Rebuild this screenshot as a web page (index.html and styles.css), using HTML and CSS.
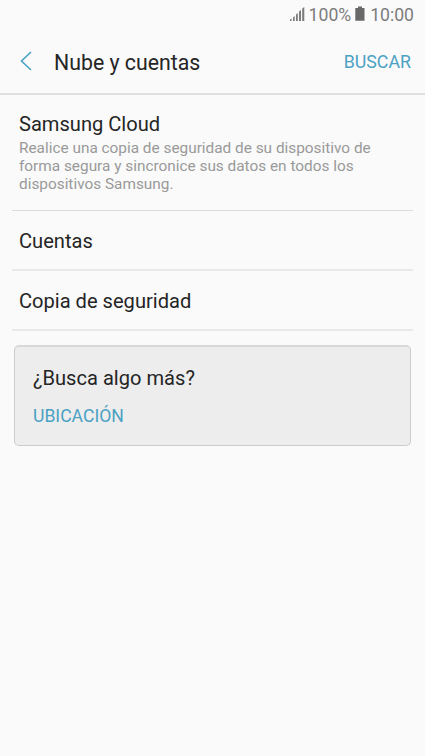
FILE: index.html
```html
<!DOCTYPE html>
<html lang="es">
<head>
<meta charset="utf-8">
<title>Nube y cuentas</title>
<link rel="stylesheet" href="styles.css">
</head>
<body>
<div class="status">
  <svg class="signal" width="15" height="14" viewBox="0 0 15 14"><path d="M0 12.500 1.500 11.500V14H0zM3 10.500 4.700 9v5H3zM6 7.500 7.800 6v8H6zM9 4.500 11 3v11H9zM12.200 1.500 14.300 0v14h-2.100z"/></svg>
  <span class="percent">100%</span>
  <svg class="battery" width="10" height="15" viewBox="0 0 10 15"><path d="M3 0.500h4V2h2.500v12.700H0.300V2H3z"/></svg>
  <span class="time">10:00</span>
</div>
<header class="bar">
  <svg class="back" width="12" height="20" viewBox="0 0 12 20"><path d="M11 1 1.500 10l9.500 9"/></svg>
  <h1>Nube y cuentas</h1>
  <a class="search">BUSCAR</a>
</header>
<main>
  <section class="row cloud">
    <h2>Samsung Cloud</h2>
    <p>Realice una copia de seguridad de su dispositivo de<br>forma segura y sincronice sus datos en todos los<br>dispositivos Samsung.</p>
  </section>
  <section class="row"><h2>Cuentas</h2></section>
  <section class="row"><h2>Copia de seguridad</h2></section>
  <aside class="card">
    <h2>¿Busca algo más?</h2>
    <a>UBICACIÓN</a>
  </aside>
</main>
</body>
</html>
```
FILE: styles.css
```css
* { box-sizing: border-box; }
body { margin: 0; height: 756px; background: #fafafa; color: #252525; font-family: Roboto, sans-serif; overflow: hidden; }
h1, h2, p { margin: 0; font-weight: 400; }
.status { height: 29px; display: flex; align-items: flex-start; justify-content: flex-end; padding-right: 11px; font-size: 17.600px; line-height: 30px; color: #7c7c7c; }
.status svg { fill: #7c7c7c; }
.signal { margin-top: 7px; }
.status .battery { margin: 6px 5px 0 4px; fill: #686868; }
.percent { margin-left: 4px; }
.bar { height: 66px; display: flex; align-items: center; padding: 0 14px 0 20px; border-bottom: 2px solid #e0e0e0; }
.back { fill: none; stroke: #4ba1c3; stroke-width: 1.6; }
.bar h1 { flex: 1; margin-left: 22px; padding-top: 3px; font-size: 21.300px; line-height: 24px; }
.search { font-size: 17.800px; color: #4ba1c3; }
.row { height: 60px; margin: 0 12px; padding: 0 7px; border-bottom: 2px solid #e9e9e9; display: flex; flex-direction: column; justify-content: center; }
.row h2, .card h2 { font-size: 20.100px; line-height: 24px; padding-top: 1px; }
.row.cloud { height: 116px; justify-content: flex-start; padding-top: 16px; border-bottom: 1px solid #dcdcdc; }
.row p { margin-top: 3px; font-size: 15.370px; line-height: 18px; color: #999; white-space: nowrap; }
.card { height: 101px; margin: 14px 14px 0; padding: 19px 18px; border: 1px solid #ccc; border-top: 2px solid #d8d8d8; border-radius: 5px; background: #ededed; }
.card h2 { padding-top: 0; }
.card a { display: block; margin-top: 14px; font-size: 17.600px; line-height: 24px; color: #4ba1c3; }
```
